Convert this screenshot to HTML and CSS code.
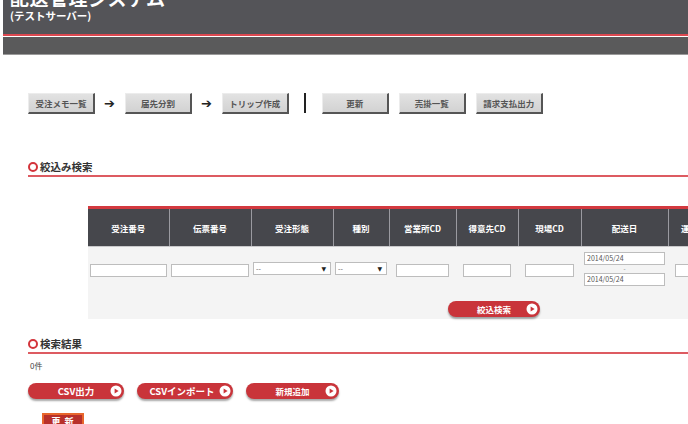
FILE: index.html
```html
<!DOCTYPE html>
<html lang="ja">
<head>
    <meta charset="UTF-8">
    <meta name="viewport" content="width=device-width, initial-scale=1.0">
    <title>配送管理システム</title>
    <link rel="stylesheet" href="styles.css">
</head>
<body>
    <!-- Header -->
    <header class="site-header">
        <div class="title-bar">
            <h1>配送管理システム</h1>
            <p>(テストサーバー)</p>
        </div>
        <div class="sub-bar"></div>
    </header>

    <main class="content">
        <!-- Flow buttons -->
        <nav class="flow">
            <a href="#" class="flow-btn">受注メモ一覧</a>
            <span class="arrow">➔</span>
            <a href="#" class="flow-btn">届先分割</a>
            <span class="arrow">➔</span>
            <a href="#" class="flow-btn">トリップ作成</a>
            <span class="divider"></span>
            <a href="#" class="flow-btn">更新</a>
            <a href="#" class="flow-btn">売掛一覧</a>
            <a href="#" class="flow-btn">請求支払出力</a>
        </nav>

        <!-- Search -->
        <section class="search">
            <h2 class="sec-title"><span class="ring"></span>絞込み検索</h2>
            <table class="search-table">
                <thead>
                    <tr>
                        <th>受注番号</th>
                        <th>伝票番号</th>
                        <th>受注形態</th>
                        <th>種別</th>
                        <th>営業所CD</th>
                        <th>得意先CD</th>
                        <th>現場CD</th>
                        <th>配送日</th>
                        <th>運送会社</th>
                        <th>車両番号</th>
                        <th>ドライバー</th>
                    </tr>
                </thead>
                <tbody>
                    <tr class="input-row">
                        <td><input type="text" class="field"></td>
                        <td><input type="text" class="field"></td>
                        <td><span class="select-wrap"><select class="field"><option>--</option></select></span></td>
                        <td><span class="select-wrap"><select class="field"><option>--</option></select></span></td>
                        <td><input type="text" class="field short"></td>
                        <td><input type="text" class="field short"></td>
                        <td><input type="text" class="field short"></td>
                        <td>
                            <div class="date-range">
                                <input type="text" class="field date" value="2014/05/24">
                                <span class="tilde">-</span>
                                <input type="text" class="field date" value="2014/05/24">
                            </div>
                        </td>
                        <td><input type="text" class="field short"></td>
                        <td><input type="text" class="field short"></td>
                        <td><input type="text" class="field short"></td>
                    </tr>
                    <tr class="button-row">
                        <td colspan="11">
                            <button class="pill-btn search-btn">絞込検索<svg class="play" viewBox="0 0 12 12"><circle cx="6" cy="6" r="5.5" fill="#fff"/><path d="M4.6 3.4 L8.6 6 L4.6 8.6 Z" fill="#c9343a"/></svg></button>
                        </td>
                    </tr>
                </tbody>
            </table>
        </section>

        <!-- Results -->
        <section class="results">
            <h2 class="sec-title"><span class="ring"></span>検索結果</h2>
            <p class="count">0件</p>
            <div class="actions">
                <button class="pill-btn csv-out">CSV出力<svg class="play" viewBox="0 0 12 12"><circle cx="6" cy="6" r="5.5" fill="#fff"/><path d="M4.6 3.4 L8.6 6 L4.6 8.6 Z" fill="#c9343a"/></svg></button>
                <button class="pill-btn csv-in">CSVインポート<svg class="play" viewBox="0 0 12 12"><circle cx="6" cy="6" r="5.5" fill="#fff"/><path d="M4.6 3.4 L8.6 6 L4.6 8.6 Z" fill="#c9343a"/></svg></button>
                <button class="pill-btn add">新規追加<svg class="play" viewBox="0 0 12 12"><circle cx="6" cy="6" r="5.5" fill="#fff"/><path d="M4.6 3.4 L8.6 6 L4.6 8.6 Z" fill="#c9343a"/></svg></button>
            </div>
            <button class="update-btn">更 新</button>
        </section>
    </main>
</body>
</html>
```

FILE: styles.css
```css
/* General Reset */
* {
    margin: 0;
    padding: 0;
    box-sizing: border-box;
    font-family: "Noto Sans CJK JP", "Liberation Sans", sans-serif;
}

html, body {
    overflow: hidden;
    background-color: #fff;
}

/* Header */
.site-header {
    margin-left: 3px;
}

.title-bar {
    height: 36px;
    background-color: #545458;
    border-bottom: 2px solid #dc4850;
    padding-left: 7px;
    overflow: hidden;
}

.title-bar h1 {
    height: 19px;
    overflow: hidden;
    font-size: 19px;
    line-height: 19px;
    margin-top: -12px;
    color: #fff;
    font-weight: bold;
    letter-spacing: 0.5px;
}

.title-bar p {
    font-size: 10.5px;
    line-height: 12px;
    margin-top: 3px;
    color: #fff;
    font-weight: bold;
}

.sub-bar {
    height: 18px;
    margin-top: 1px;
    background-color: #5a5a5b;
    border-bottom: 1px solid #9a9a9a;
}

/* Content */
.content {
    padding-left: 28px;
}

/* Flow buttons */
.flow {
    display: flex;
    align-items: center;
    margin-top: 37px;
    height: 22px;
}

.flow-btn {
    display: flex;
    align-items: center;
    justify-content: center;
    width: 67px;
    height: 21px;
    background: linear-gradient(#e2e2e2, #d2d2d2);
    border-top: 1px solid #ececec;
    border-left: 1px solid #ececec;
    border-right: 2px solid #555;
    border-bottom: 2px solid #555;
    color: #555;
    font-size: 8.5px;
    font-weight: bold;
    text-decoration: none;
    margin-right: 10px;
}

.arrow {
    font-size: 13px;
    font-weight: bold;
    color: #222;
    margin: 0 10px 0 -1px;
    font-family: "DejaVu Sans", sans-serif;
}

.divider {
    width: 2px;
    height: 20px;
    background-color: #222;
    margin: 0 16px 0 5px;
}

/* Section titles */
.sec-title {
    display: flex;
    align-items: center;
    gap: 2px;
    font-size: 10.5px;
    line-height: 14px;
    font-weight: bold;
    color: #333;
    border-bottom: 2px solid #dd5b61;
    padding-bottom: 1px;
}

.ring {
    width: 10px;
    height: 10px;
    border: 2.5px solid #d3343b;
    border-radius: 50%;
}

.search .sec-title {
    margin-top: 46px;
}

/* Search table */
.search-table {
    margin-top: 29px;
    margin-left: 60px;
    border-collapse: collapse;
    width: 812px;
    table-layout: fixed;
    border-top: 3px solid #d3393f;
}

.search-table th {
    height: 39px;
    background-color: #46474c;
    color: #fff;
    font-size: 8.5px;
    font-weight: bold;
    text-align: center;
    border-left: 1px solid #9a9aa0;
    border-bottom: 1px solid #c9c9cb;
}

.search-table th:first-child {
    border-left: none;
}

.search-table th:nth-child(1) { width: 81px; }
.search-table th:nth-child(2) { width: 82px; }
.search-table th:nth-child(3) { width: 82px; }
.search-table th:nth-child(4) { width: 56px; }
.search-table th:nth-child(5) { width: 67px; }
.search-table th:nth-child(6) { width: 62px; }
.search-table th:nth-child(7) { width: 63px; }
.search-table th:nth-child(8) { width: 87px; }
.search-table th:nth-child(9) { width: 60px; }
.search-table th:nth-child(10) { width: 86px; }
.search-table th:nth-child(11) { width: 86px; }

.search-table td {
    background-color: #f4f4f4;
    text-align: center;
    vertical-align: middle;
}

.input-row td {
    height: 43px;
}

.field {
    width: calc(100% - 4px);
    height: 13px;
    border: 1px solid #bdbdbd;
    background-color: #fff;
    font-size: 7px;
    color: #555;
    padding: 0 2px;
    outline: none;
    vertical-align: middle;
}

.field.short {
    width: calc(100% - 14px);
}

.select-wrap {
    position: relative;
    display: block;
    margin: 0 2px;
    height: 13px;
}

.select-wrap select {
    display: block;
    width: 100%;
    appearance: none;
    -webkit-appearance: none;
    border-radius: 0;
    text-align: left;
    line-height: 11px;
}

.select-wrap::after {
    content: "▼";
    position: absolute;
    right: 5px;
    top: 3px;
    font-size: 6px;
    line-height: 7px;
    color: #222;
    font-family: "DejaVu Sans", sans-serif;
}

.date-range {
    display: flex;
    flex-direction: column;
    align-items: center;
    padding-top: 1px;
}

.field.date {
    width: 81px;
    height: 13px;
    text-align: left;
}

.tilde {
    font-size: 6px;
    line-height: 8px;
    color: #777;
}

.button-row td {
    height: 28px;
    padding-bottom: 2px;
}

/* Red pill buttons */
.pill-btn {
    display: inline-flex;
    align-items: center;
    justify-content: space-between;
    height: 16px;
    border: none;
    border-radius: 8px;
    background-color: #c9343a;
    box-shadow: 0 2px 2px rgba(0, 0, 0, 0.35);
    color: #fff;
    font-size: 8.5px;
    font-weight: bold;
    padding: 0 2px 0 2px;
    cursor: pointer;
}

.pill-btn::before {
    content: "";
    width: 12px;
}

.play {
    width: 12px;
    height: 12px;
}

.search-btn {
    width: 92px;
}

/* Results */
.results .sec-title {
    margin-top: 18px;
}

.count {
    font-size: 8px;
    line-height: 12px;
    color: #444;
    margin-top: 6px;
    padding-left: 2px;
}

.actions {
    display: flex;
    gap: 13px;
    margin-top: 11px;
}

.csv-out {
    width: 96px;
    font-size: 9.5px;
}

.csv-in {
    width: 96px;
    font-size: 9.5px;
}

.csv-in::before {
    width: 6px;
}

.add {
    width: 93px;
}

.update-btn {
    display: block;
    margin: 14px 0 0 14px;
    width: 42px;
    height: 18px;
    background-color: #b8302a;
    border: 2px solid #e8662c;
    color: #fff;
    font-size: 9px;
    font-weight: bold;
    letter-spacing: 1px;
}
```
